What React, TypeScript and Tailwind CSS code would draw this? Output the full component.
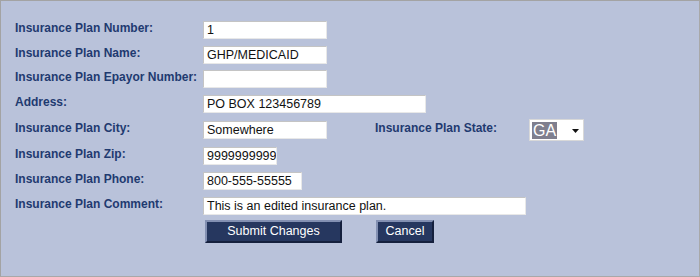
import React from "react";

const font = { fontFamily: '"Liberation Sans", Arial, sans-serif' };

function Label({ children }: { children: React.ReactNode }) {
  return (
    <div className="w-[188px] shrink-0 text-[12px] font-bold leading-[14px] text-[#1f3a70]">
      {children}
    </div>
  );
}

function Field({ value, w }: { value: string; w: string }) {
  return (
    <div
      className={`${w} h-[18px] shrink-0 bg-white border border-t-[#c4c4c4] border-l-[#c4c4c4] border-r-[#e8e8e8] border-b-[#e8e8e8] pl-[3px] text-[12.5px] leading-[16px] text-[#111] whitespace-nowrap overflow-hidden`}
    >
      {value}
    </div>
  );
}

export default function App() {
  return (
    <div
      style={font}
      className="w-[700px] h-[277px] bg-[#b9c2da] border border-t-[#a3a3a3] border-l-[#a3a3a3] border-r-[#a8a8a8] border-b-[#a8a8a8] box-border"
    >
      <div className="pt-[20px] pl-[14px] flex flex-col">
        <div className="flex h-[25px]">
          <Label>Insurance Plan Number:</Label>
          <Field value="1" w="w-[124px]" />
        </div>
        <div className="flex h-[24px]">
          <Label>Insurance Plan Name:</Label>
          <Field value="GHP/MEDICAID" w="w-[124px]" />
        </div>
        <div className="flex h-[25px]">
          <Label>Insurance Plan Epayor Number:</Label>
          <Field value="" w="w-[124px]" />
        </div>
        <div className="flex h-[24px]">
          <Label>Address:</Label>
          <Field value="PO BOX 123456789" w="w-[223px]" />
        </div>
        <div className="flex h-[28px]">
          <div className="pt-[2px] flex">
            <Label>Insurance Plan City:</Label>
            <Field value="Somewhere" w="w-[124px]" />
          </div>
          <div className="pt-[2px] ml-[48px] w-[154px] text-[12px] font-bold leading-[14px] text-[#1f3a70]">
            Insurance Plan State:
          </div>
          <div className="w-[55px] h-[22px] bg-white border border-[#d8d8d8] flex items-center pl-[2px]">
            <span className="bg-[#7f7f8e] text-white text-[16px] leading-[17px] px-[1px]">GA</span>
            <svg width="7" height="4" viewBox="0 0 7 4" className="ml-[15px] mt-[1px]">
              <polygon points="0,0 7,0 3.5,4" fill="#111" />
            </svg>
          </div>
        </div>
        <div className="flex h-[25px]">
          <Label>Insurance Plan Zip:</Label>
          <Field value="9999999999" w="w-[74px]" />
        </div>
        <div className="flex h-[25px]">
          <Label>Insurance Plan Phone:</Label>
          <Field value="800-555-55555" w="w-[99px]" />
        </div>
        <div className="flex h-[23px]">
          <Label>Insurance Plan Comment:</Label>
          <Field value="This is an edited insurance plan." w="w-[323px]" />
        </div>
        <div className="flex pl-[190px] gap-[34px]">
          <button className="w-[137px] h-[23px] bg-[#26375f] text-white text-[12.5px] leading-[17px] border-2 border-t-[#8390b2] border-l-[#8390b2] border-r-[#15203d] border-b-[#15203d]">
            Submit Changes
          </button>
          <button className="w-[58px] h-[23px] bg-[#26375f] text-white text-[12.5px] leading-[17px] border-2 border-t-[#8390b2] border-l-[#8390b2] border-r-[#15203d] border-b-[#15203d]">
            Cancel
          </button>
        </div>
      </div>
    </div>
  );
}
